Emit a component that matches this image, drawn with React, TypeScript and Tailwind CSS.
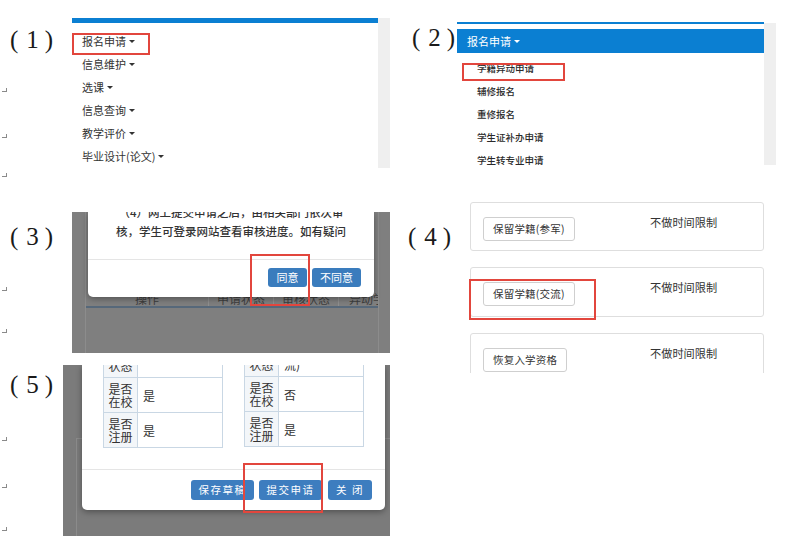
const ui = "font-['Noto_Sans_CJK_SC','Noto_Sans',sans-serif]";

const mainMenu = ["报名申请", "信息维护", "选课", "信息查询", "教学评价", "毕业设计(论文)"];
const applyMenu = ["学籍异动申请", "辅修报名", "重修报名", "学生证补办申请", "学生转专业申请"];
const statusCards = ["保留学籍(参军)", "保留学籍(交流)", "恢复入学资格"];

function Caret() {
  return (
    <span className="inline-block w-0 h-0 ml-[3px] align-middle border-t-[3.5px] border-x-[3px] border-b-0 border-x-transparent border-t-current" />
  );
}

// small paragraph mark in the left margin
function Mark({ className }: { className: string }) {
  return <span className={`block w-[5px] h-[4px] ml-[2px] border-r border-b border-[#8a8a8a] ${className}`} />;
}

function StepLabel({ n, className }: { n: number; className: string }) {
  return (
    <div className={className}>
      <div className="flex items-center h-[26px] font-['Liberation_Serif',serif] text-[25px] leading-[26px] text-[#1a1a1a]">
        <span>(</span>
        <span className="ml-[8px]">{n}</span>
        <span className="ml-[6px]">)</span>
      </div>
    </div>
  );
}

function RedBox({ className }: { className: string }) {
  return <span className={`absolute border-2 border-[#e2463d] pointer-events-none ${className}`} />;
}

function NavMenu() {
  return (
    <div className="relative flex w-[318px] h-[150px]">
      <div className="w-[306px] bg-white">
        <div className="h-[5px] bg-[#0b7fd2]" />
        <ul className="pt-[7px] pl-[10px]">
          {mainMenu.map((m) => (
            <li key={m} className="h-[23px] flex items-center text-[11px] text-[#333]">
              {m}
              <Caret />
            </li>
          ))}
        </ul>
      </div>
      <div className="w-[12px] bg-[#efefef]" />
      <RedBox className="left-0 top-[15px] w-[78px] h-[22px]" />
    </div>
  );
}

function ApplyMenu() {
  return (
    <div className="relative flex w-[319px] h-[143px] overflow-hidden">
      <div className="w-[307px] bg-white">
        <div className="h-[2px] bg-[#0b7fd2]" />
        <div className="mt-[5px] h-[24px] bg-[#0b7fd2] pl-[10px] flex items-center text-[11px] text-white">
          报名申请
          <Caret />
        </div>
        <ul className="pt-[4px] pl-[20px]">
          {applyMenu.map((m) => (
            <li key={m} className="h-[23px] flex items-center text-[9.5px] font-medium text-[#2a2a2a]">
              {m}
            </li>
          ))}
        </ul>
      </div>
      <div className="w-[12px] mt-[1px] bg-[#efefef]" />
      <RedBox className="left-[5px] top-[41px] w-[103px] h-[18px]" />
    </div>
  );
}

function AgreeDialog() {
  return (
    <div className="relative w-[318px] h-[141px] bg-[#7f7f7f] overflow-hidden">
      {/* dimmed list behind the dialog */}
      <div className="ml-[13px] w-[294px] h-full pt-[80px] border-x border-[#8c8c8c]">
        <div className="flex h-[16px] border-b-2 border-[#56687a] text-[12px] leading-[14px] text-[#3e3e3e]">
          <div className="w-[122px] text-center">操作</div>
          <div className="w-[65px] border-l border-[#8f8f8f] text-center">申请状态</div>
          <div className="w-[65px] border-l border-[#8f8f8f] text-center">审核状态</div>
          <div className="flex-1 border-l border-[#8f8f8f] pl-[10px] whitespace-nowrap overflow-hidden">异动学生</div>
        </div>
      </div>

      <div className="absolute left-[16px] top-0 w-[286px] h-[85px] bg-white rounded-b-[5px] shadow-[0_2px_6px_rgba(0,0,0,0.35)] flex flex-col">
        <div className="h-[48px] border-b border-[#e5e5e5] overflow-hidden text-center text-[11.5px] leading-[15px] font-medium text-[#333]">
          <p className="-mt-[7px] whitespace-nowrap">（4）网上提交申请之后，由相关部门依次审</p>
          <p className="mt-[3.5px] whitespace-nowrap">核，学生可登录网站查看审核进度。如有疑问</p>
        </div>
        <div className="flex justify-end gap-[5px] pt-[8px] pr-[13px]">
          <button className="w-[39px] h-[19px] rounded-[3px] bg-[#3a7cbd] text-white text-[11px] leading-none">同意</button>
          <button className="w-[49px] h-[19px] rounded-[3px] bg-[#3a7cbd] text-white text-[11px] leading-none">不同意</button>
        </div>
      </div>
      <RedBox className="left-[178px] top-[42px] w-[60px] h-[52px]" />
    </div>
  );
}

function StatusList() {
  return (
    <div className="relative w-[298px] h-[173px] overflow-hidden">
      <div className="flex flex-col gap-[16px] px-[2px] pt-[2px]">
        {statusCards.map((c, i) => (
          <div
            key={c}
            className={`flex items-start border border-[#dedede] rounded-[3px] pt-[11px] pl-[12px] ${i === 0 ? "h-[49px]" : "h-[50px]"}`}
          >
            <div className="w-[167px]">
              <button className="h-[24px] px-[9px] border border-[#cfcfcf] rounded-[3px] bg-white text-[10.5px] tracking-[0.2px] text-[#333] whitespace-nowrap">
                {c}
              </button>
            </div>
            <span className="text-[11.2px] leading-[17px] text-[#333]">不做时间限制</span>
          </div>
        ))}
      </div>
      <RedBox className="left-[1px] top-[79px] w-[127px] h-[41px]" />
    </div>
  );
}

type Row = { label: string[]; value: string[] };

function InfoTable({ rows, shift }: { rows: Row[]; shift: string }) {
  return (
    <table className={`border-collapse text-[12px] leading-[13px] text-[#333] ${shift}`}>
      <tbody>
        {rows.map((r, i) => (
          <tr key={i} className={i === 0 ? "h-[38px]" : "h-[35px]"}>
            <td className="w-[34px] border border-[#c9d7e4] bg-[#f3f6f9] px-[3px] text-center">
              {r.label.map((l) => (
                <div key={l}>{l}</div>
              ))}
            </td>
            <td className="w-[85px] border border-[#c9d7e4] pl-[5px]">
              {r.value.map((v) => (
                <div key={v}>{v}</div>
              ))}
            </td>
          </tr>
        ))}
      </tbody>
    </table>
  );
}

function SubmitDialog() {
  return (
    <div className="relative w-[327px] h-[171px] bg-[#7b7b7b] overflow-hidden">
      <div className="ml-[13px] mt-[73px] h-full border-l border-t border-[#8b8b8b]" />

      <div className="absolute left-[19px] top-0 w-[303px] h-[145px] bg-white rounded-b-[5px] shadow-[0_2px_6px_rgba(0,0,0,0.35)] flex flex-col">
        <div className="h-[105px] border-b border-[#e5e5e5] overflow-hidden flex gap-[21px] pl-[21px]">
          <InfoTable
            shift="-mt-[26px] self-start"
            rows={[
              { label: ["学籍", "状态"], value: [""] },
              { label: ["是否", "在校"], value: ["是"] },
              { label: ["是否", "注册"], value: ["是"] },
            ]}
          />
          <InfoTable
            shift="-mt-[27px] self-start"
            rows={[
              { label: ["学籍", "状态"], value: ["保留学籍(交", "流)"] },
              { label: ["是否", "在校"], value: ["否"] },
              { label: ["是否", "注册"], value: ["是"] },
            ]}
          />
        </div>
        <div className="flex justify-end gap-[5px] pt-[10px] pr-[13px] text-[10.5px] tracking-[1.5px] text-white">
          <button className="w-[63px] h-[20px] rounded-[3px] bg-[#3d7dbf] leading-none">保存草稿</button>
          <button className="w-[63px] h-[20px] rounded-[3px] bg-[#3d7dbf] leading-none">提交申请</button>
          <button className="w-[44px] h-[20px] ml-[1px] rounded-[3px] bg-[#3d7dbf] leading-none">关 闭</button>
        </div>
      </div>
      <RedBox className="left-[180px] top-[98px] w-[80px] h-[50px]" />
    </div>
  );
}

export default function App() {
  return (
    <div className={`w-[799px] h-[545px] bg-white overflow-hidden flex ${ui}`}>
      <div className="w-[8px] flex flex-col">
        <Mark className="mt-[88px]" />
        <Mark className="mt-[42px]" />
        <Mark className="mt-[35px]" />
        <Mark className="mt-[110px]" />
        <Mark className="mt-[38px]" />
        <Mark className="mt-[104px]" />
        <Mark className="mt-[43px]" />
        <Mark className="mt-[39px]" />
      </div>

      <div className="w-[392px] flex flex-col">
        <div className="flex mt-[18px]">
          <StepLabel n={1} className="w-[64px] pt-[9px] pl-[2px]" />
          <NavMenu />
        </div>
        <div className="flex mt-[44px]">
          <StepLabel n={3} className="w-[64px] pt-[12px] pl-[2px]" />
          <AgreeDialog />
        </div>
        <div className="flex mt-[12px]">
          <StepLabel n={5} className="w-[55px] pt-[7px] pl-[2px]" />
          <SubmitDialog />
        </div>
      </div>

      <div className="w-[399px] flex flex-col">
        <div className="flex mt-[22px]">
          <StepLabel n={2} className="w-[57px] pt-[3px] pl-[12px]" />
          <ApplyMenu />
        </div>
        <div className="flex mt-[35px]">
          <StepLabel n={4} className="w-[68px] pt-[24px] pl-[8px]" />
          <StatusList />
        </div>
      </div>
    </div>
  );
}
